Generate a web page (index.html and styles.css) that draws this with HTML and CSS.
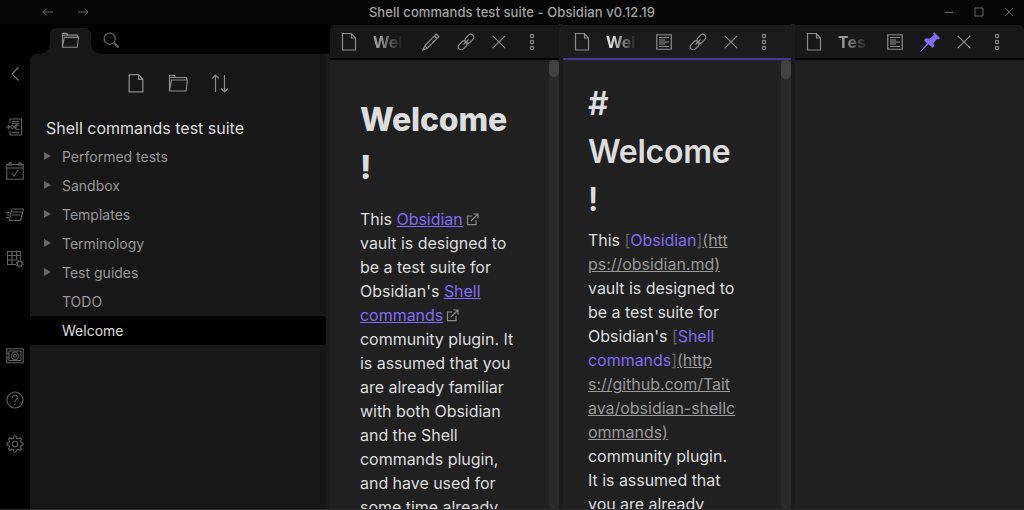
FILE: index.html
```html
<!DOCTYPE html>
<html lang="en">
<head>
<meta charset="utf-8">
<title>Shell commands test suite - Obsidian v0.12.19</title>
<link rel="stylesheet" href="styles.css">
</head>
<body>
<svg class="defs" width="0" height="0">
  <symbol id="doc" viewBox="0 0 16 20"><path d="M1.500 1.500h9L14.500 6v12h-13z M10.500 1.500V6h4" /></symbol>
  <symbol id="folder" viewBox="0 0 21 19"><path d="M1.500 17V1.500h5l1 2h11v2.500 M1.500 17L3.500 6h16l-1.500 11z M2 3.500h6" /></symbol>
  <symbol id="link" viewBox="0 0 18 18"><g transform="rotate(-45 9 9)"><rect x="-.7" y="6" width="10" height="6" rx="3"/><rect x="8.700" y="6" width="10" height="6" rx="3"/><path d="M5.500 9h7"/></g></symbol>
  <symbol id="cross" viewBox="0 0 14 14"><path d="M.8.8l12.400 12.400M13.200.8L.8 13.200"/></symbol>
  <symbol id="dots" viewBox="0 0 6 18"><circle cx="3" cy="3" r="1.700"/><circle cx="3" cy="9" r="1.700"/><circle cx="3" cy="15" r="1.700"/></symbol>
  <symbol id="preview" viewBox="0 0 16 16"><path d="M.75.75h14.500v14.500H.75z M3 3.500h10M3 12.500h10M3 10.500h6M9 8h4M3 5.500h6"/><path class="solid" d="M3 5h6v6H3z"/></symbol>
  <symbol id="external" viewBox="0 0 13 13"><path d="M6 3H1.500v8.700H10V7 M7.500 1H12v4.500 M12 1L5 8"/></symbol>
</svg>
<div class="app">
  <header class="titlebar">
    <div class="history">
      <svg width="12" height="10" viewBox="0 0 12 10"><path d="M11 5H1M4.500 1.500L1 5l3.500 3.500"/></svg>
      <svg width="12" height="10" viewBox="0 0 12 10"><path d="M1 5h10M7.500 1.500L11 5 7.500 8.500"/></svg>
    </div>
    <div class="title">Shell commands test suite - Obsidian v0.12.19</div>
    <div class="window-buttons">
      <svg width="10" height="10" viewBox="0 0 10 10"><path d="M1 5.500h8"/></svg>
      <svg width="10" height="10" viewBox="0 0 10 10"><path d="M1 1h8v8H1z"/></svg>
      <svg width="10" height="10" viewBox="0 0 10 10"><path d="M1 1l8 8M9 1L1 9"/></svg>
    </div>
  </header>
  <main class="workspace">
    <nav class="ribbon">
      <svg class="collapse" width="10" height="16" viewBox="0 0 10 16"><path d="M8.500 1.500L2 8l6.500 6.500"/></svg>
      <svg width="18" height="18" viewBox="0 0 18 18"><path d="M4 5V1h11.500v16H4v-4M6 3.500h7M6 5.500h7M10 7.500h3M10 11.500h3M6 14.500h7M0 9h3M2 7l2 2-2 2"/><circle cx="6.500" cy="9" r="1.500"/><path d="M8 9l2-2v4z"/></svg>
      <svg width="18" height="18" viewBox="0 0 18 18"><path d="M.8 2.500h16.400v14.700H.8z M.8 6h16.400M6 11.500l2 2.500 4-6M3 4V.8h2V4M13 4V.8h2V4"/></svg>
      <svg width="18" height="14" viewBox="0 0 18 14"><path d="M5 4h11.500l-2 8.500H3.500z M5.500 3.500L6 1h11.500l-2 9M6 7h8M0 4.500h4M.5 7h3M0 9.500h3"/></svg>
      <svg width="18" height="18" viewBox="0 0 18 18"><path d="M10 14.500H1.500v-13h13v8 M1.500 5.500h13M1.500 10h9M6 1.500v13M10.500 1.500v8"/><circle cx="13.700" cy="13.700" r="2.400"/><circle cx="13.700" cy="13.700" r="3.400" stroke-dasharray="1.400 1.270"/></svg>
      <svg class="vault" width="18" height="16" viewBox="0 0 18 16"><path d="M.8.8h16.400v13.900H.8z M3 3h12v9.500H3z M3 5.500H1.500M3 10H1.500"/><circle cx="9" cy="7.750" r="3.700"/><circle cx="9" cy="7.750" r="1.500"/></svg>
      <svg width="18" height="18" viewBox="0 0 18 18"><circle cx="9" cy="9" r="8"/><path d="M6.500 7c0-3.500 5-3.500 5-.7C11.500 8.500 9 8.200 9 11M9 12.500v1.500"/></svg>
      <svg width="18" height="18" viewBox="0 0 18 18"><circle cx="9" cy="9" r="2.700"/><path d="M7.500 3.300L8 1h2l.5 2.300 1.700.7 2-1.300 1.300 1.300-1.200 2 .7 1.600L17 8v2l-2 .5-.7 1.600 1.200 2-1.300 1.400-2-1.300-1.700.7L10 17H8l-.5-2.100-1.700-.7-2 1.300-1.300-1.400 1.200-2L3 10.500 1 10V8l2-.4.7-1.600-1.200-2 1.300-1.300 2 1.300z"/></svg>
    </nav>
    <aside class="sidebar">
      <div class="tabs">
        <div class="tab"><svg width="19" height="17"><use href="#folder"/></svg></div>
        <svg class="search" width="17" height="17" viewBox="0 0 17 17"><circle cx="6.700" cy="6.700" r="5.600"/><path d="M11 11l4.500 4.500" stroke-width="2"/></svg>
      </div>
      <div class="files">
        <div class="file-actions">
          <svg width="18" height="21"><use href="#doc"/></svg>
          <svg width="21" height="19"><use href="#folder"/></svg>
          <svg width="18" height="19" viewBox="0 0 18 19"><path d="M4.500 18V1M1 4.500L4.500 1 8 4.500M13.500 1v17M10 14.500l3.500 3.500 3.500-3.500"/></svg>
        </div>
        <div class="vault-name">Shell commands test suite</div>
        <div class="row folder">Performed tests</div>
        <div class="row folder">Sandbox</div>
        <div class="row folder">Templates</div>
        <div class="row folder">Terminology</div>
        <div class="row folder">Test guides</div>
        <div class="row">TODO</div>
        <div class="row selected">Welcome</div>
      </div>
    </aside>
    <section class="pane first">
      <div class="pane-header">
        <svg width="16" height="20"><use href="#doc"/></svg>
        <div class="pane-title">Wel</div>
        <div class="actions">
          <svg width="18" height="18" viewBox="0 0 18 18"><path d="M1 17l1.800-4.200L14.200 1.200l2.600 2.600L5.200 15.200z M12.500 3l2.500 2.500M2.800 12.800l2.400 2.400"/></svg>
          <svg width="18" height="18"><use href="#link"/></svg>
          <svg width="14" height="14"><use href="#cross"/></svg>
          <svg width="6" height="18"><use href="#dots"/></svg>
        </div>
      </div>
      <div class="pane-body">
        <article class="doc">
          <h1>Welcome<br>!</h1>
          <p>This <a>Obsidian</a><svg class="ext" width="13" height="13"><use href="#external"/></svg><br>vault is designed to<br>be a test suite for<br>Obsidian's <a>Shell<br>commands</a><svg class="ext" width="13" height="13"><use href="#external"/></svg><br>community plugin. It<br>is assumed that you<br>are already familiar<br>with both Obsidian<br>and the Shell<br>commands plugin,<br>and have used for<br>some time already</p>
        </article>
        <div class="scrollbar"><div class="thumb"></div></div>
      </div>
    </section>
    <section class="pane active">
      <div class="pane-header">
        <svg width="16" height="20"><use href="#doc"/></svg>
        <div class="pane-title">Wel</div>
        <div class="actions">
          <svg width="16" height="16"><use href="#preview"/></svg>
          <svg width="18" height="18"><use href="#link"/></svg>
          <svg width="14" height="14"><use href="#cross"/></svg>
          <svg width="6" height="18"><use href="#dots"/></svg>
        </div>
      </div>
      <div class="pane-body">
        <article class="doc source">
          <h1># <br>Welcome<br>!</h1>
          <p>This <i>[</i><b>Obsidian</b><i>]</i><u>(htt<br>ps://obsidian.md)</u><br>vault is designed to<br>be a test suite for<br>Obsidian's <i>[</i><b>Shell<br>commands</b><i>]</i><u>(http<br>s://github.com/Tait<br>ava/obsidian-shellc<br>ommands)</u><br>community plugin.<br>It is assumed that<br>you are already</p>
        </article>
        <div class="scrollbar"><div class="thumb"></div></div>
      </div>
    </section>
    <section class="pane last">
      <div class="pane-header">
        <svg width="16" height="20"><use href="#doc"/></svg>
        <div class="pane-title">Tes</div>
        <div class="actions">
          <svg width="16" height="16"><use href="#preview"/></svg>
          <svg class="pin" width="20" height="20" viewBox="0 0 20 20"><path d="M14 0l6 6-1.500 1.500L17 7l-3.500 4 .5 3-1.500 2-4-3.700L.8 20 0 19.500 7 11.500 4 8 6 6.300l3.500.4L14 3l-1-1.500z"/></svg>
          <svg width="14" height="14"><use href="#cross"/></svg>
          <svg width="6" height="18"><use href="#dots"/></svg>
        </div>
      </div>
      <div class="pane-body"></div>
    </section>
  </main>
</div>
</body>
</html>
```
FILE: styles.css
```css
* { box-sizing: border-box; }
body { margin: 0; background: #000; color: #dcddde; font: 16px/24px Inter, sans-serif; overflow: hidden; }
svg { display: block; flex: none; fill: none; stroke: #8b8b8b; stroke-width: 1.2; }
.defs { position: absolute; }
.solid { fill: #555; stroke: none; }
.app { height: 510px; display: flex; flex-direction: column; border-bottom: 1px solid #2b292b; }
.titlebar { height: 24px; flex: none; background: #060606; display: grid; grid-template-columns: 1fr auto 1fr; align-items: center; }
.titlebar svg { stroke: #666; stroke-width: 1; }
.history { display: flex; gap: 23px; padding-left: 42px; }
.title { font-size: 13px; font-weight: 500; letter-spacing: .09px; color: #a3a3a3; }
.window-buttons { display: flex; justify-content: flex-end; gap: 20px; padding-right: 10px; }
.workspace { flex: 1; min-height: 0; display: flex; }
.ribbon { width: 30px; flex: none; display: flex; flex-direction: column; align-items: center; padding: 42px 0 56px; }
.ribbon svg { stroke: #626262; stroke-width: 1.1; margin-bottom: 26px; }
.ribbon .collapse { stroke: #777; margin-bottom: 36px; }
.ribbon .vault { margin-top: auto; margin-bottom: 27px; }
.ribbon svg:nth-child(4) { margin: 2px 0 28px; }
.ribbon svg:last-child { margin-bottom: 0; }
.sidebar { width: 300px; flex: none; display: flex; flex-direction: column; }
.tabs { height: 30px; flex: none; display: flex; padding: 4px 0 0 20px; }
.tab { width: 41px; background: #171717; border-radius: 6px 6px 0 0; padding: 4px 0 0 11px; position: relative; }
.tab::before, .tab::after { content: ""; position: absolute; bottom: 0; width: 10px; height: 10px; }
.tab::before { left: -10px; background: radial-gradient(circle at 0 0, transparent 9.5px, #171717 10px); }
.tab::after { right: -10px; background: radial-gradient(circle at 100% 0, transparent 9.5px, #171717 10px); }
.search { margin: 4px 0 0 12px; stroke: #666; }
.files { flex: 1; background: #171717; border-radius: 6px 0 0; border-right: 4px solid #1b1b1b; }
.file-actions { height: 60px; display: flex; align-items: center; gap: 22.5px; padding: 0 0 2px 97px; }
.vault-name { height: 28px; line-height: 29px; padding-left: 16px; }
.row { height: 29px; line-height: 29px; padding-left: 32px; font-size: 14px; color: #999; position: relative; }
.folder::before { content: ""; position: absolute; left: 14px; top: 10px; border: solid transparent; border-width: 4.500px 0 4.500px 7px; border-left-color: #666; }
.selected { background: #000; color: #dcddde; border-radius: 3px; }
.pane { width: 233px; flex: none; display: flex; flex-direction: column; border-right: 4px solid #1b1b1b; padding-top: 1px; }
.active { width: 232px; }
.last { width: auto; flex: 1; border: 0; }
.pane-header { height: 35px; flex: none; display: flex; align-items: center; background: #171717; border-bottom: 2px solid #000; padding: 0 24px 0 11px; }
.first .pane-header { border-radius: 5px 0 0; }
.last .pane-header { border-radius: 0 5px 0 0; }
.active .pane-header { background: #1b1b1b; border-color: #483699; }
.pane-title { width: 32px; margin-left: 16px; font-weight: 700; color: #999; white-space: nowrap; overflow: hidden; -webkit-mask-image: linear-gradient(90deg, #000 20%, transparent 95%); mask-image: linear-gradient(90deg, #000 20%, transparent 95%); }
.active .pane-title { color: #dcddde; }
.actions { margin-left: auto; display: flex; align-items: center; gap: 17px; }
.actions svg:last-child { margin-left: 6px; }
svg.pin { fill: #7f6df2; stroke: none; }
.pane-body { flex: 1; min-height: 0; display: flex; background: #202020; overflow: hidden; }
.doc { flex: 1; min-width: 0; padding: 36px 0 0 30px; white-space: nowrap; }
h1 { margin: 0 0 15px; font-size: 32px; line-height: 48px; font-weight: 800; letter-spacing: -.2px; }
p { margin: 0; letter-spacing: -.03px; }
.doc a { color: #7f6df2; text-decoration: underline; }
.ext { display: inline-block; vertical-align: -1px; margin-left: 3px; }
.source { padding: 20px 0 0 25px; }
.source h1 { font-weight: 600; margin-bottom: 4px; letter-spacing: -.25px; }
.source b { color: #7f6df2; font-weight: 400; }
.source i { color: #666; font-style: normal; }
.source u { color: #999; }
.scrollbar { width: 10px; flex: none; background: #2a2a2a; border-radius: 0 0 5px 5px; }
.thumb { height: 17px; background: #424242; border-radius: 5px; }
.active .thumb { height: 19px; }
```
